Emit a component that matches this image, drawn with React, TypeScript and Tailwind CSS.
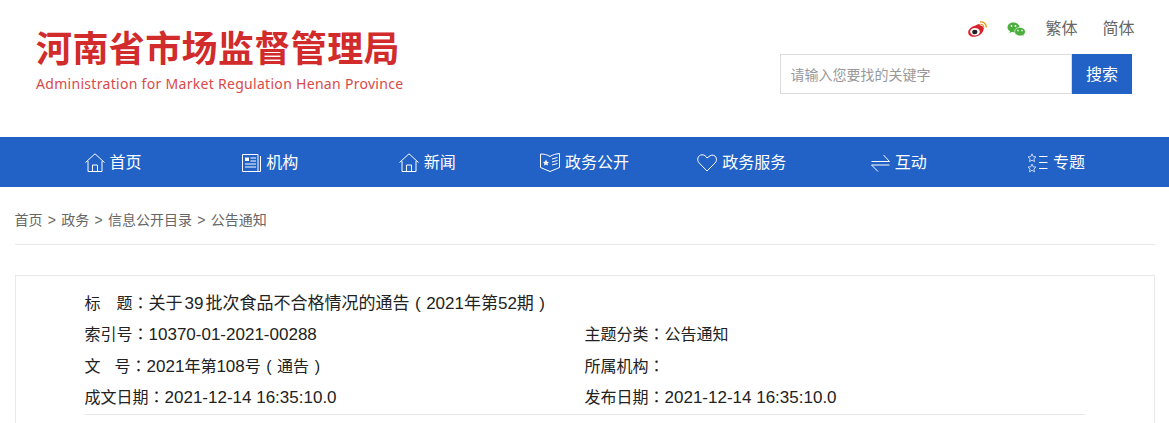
const navItems = [
  { label: "首页", icon: <HomeIcon /> },
  { label: "机构", icon: <PaperIcon /> },
  { label: "新闻", icon: <HomeIcon /> },
  { label: "政务公开", icon: <BookIcon /> },
  { label: "政务服务", icon: <HeartIcon /> },
  { label: "互动", icon: <SwapIcon /> },
  { label: "专题", icon: <StarsIcon /> },
];

function HomeIcon() {
  return (
    <svg width="20" height="19" viewBox="0 0 20 19" fill="none" stroke="white" strokeWidth="1">
      <path d="M0.5 9.5 L10 0.8 L19.5 9.5" />
      <path d="M3 8 V18.5 H17 V8" />
      <path d="M7.5 18.5 V12 H12.5 V18.5" />
    </svg>
  );
}

function PaperIcon() {
  return (
    <svg width="19" height="18" viewBox="0 0 19 18" fill="none" stroke="white" strokeWidth="1">
      <path d="M16 0.5 H0.5 V17.5 H16 Z" />
      <path d="M18.5 2 V17.5 H16" />
      <rect x="3" y="3.5" width="4" height="3.5" fill="white" stroke="none" />
      <path d="M8.5 4 H14 M8.5 7 H14 M3 10 H14 M3 13 H14" />
    </svg>
  );
}

function BookIcon() {
  return (
    <svg width="20" height="19" viewBox="0 0 20 19" fill="none" stroke="white" strokeWidth="1">
      <path d="M0.5 1 C4 1 7 1.5 10 3.5 C13 1.5 16 1 19.5 0.5 V14.5 L10 18.5 L0.5 14.5 Z" />
      <path d="M12 6 L17.5 4.5 M12 9 L17.5 7.5 M12 12 L17.5 10.5" />
      <path d="M6 6.5 L7 8.8 L9 9 L7.5 10.4 L8 12.5 L6 11.4 L4 12.5 L4.5 10.4 L3 9 L5 8.8 Z" fill="white" stroke="none" />
    </svg>
  );
}

function HeartIcon() {
  return (
    <svg width="20" height="18" viewBox="0 0 20 18" fill="none" stroke="white" strokeWidth="1">
      <path d="M10 17 L2 8.8 C-0.5 6 0.8 1 5 0.8 C7.5 0.7 9 2.2 10 4 L13 1.8 C15 0.5 18 1 19 3.5 C20 6 19.3 7.5 18 9 Z" />
    </svg>
  );
}

function SwapIcon() {
  return (
    <svg width="19" height="18" viewBox="0 0 19 18" fill="none" stroke="white" strokeWidth="1">
      <path d="M0.5 7.5 H18.5 L12.5 1" />
      <path d="M18.5 11 H0.5 L7 17.5" />
    </svg>
  );
}

function StarsIcon() {
  return (
    <svg width="21" height="20" viewBox="0 0 21 20" fill="none" stroke="#c7d7f2" strokeWidth="1">
      <path d="M5 0.8 L6.2 3.6 L9 3.9 L6.9 5.8 L7.5 8.6 L5 7.2 L2.5 8.6 L3.1 5.8 L1 3.9 L3.8 3.6 Z" />
      <path d="M5 11 L6.2 13.8 L9 14.1 L6.9 16 L7.5 18.8 L5 17.4 L2.5 18.8 L3.1 16 L1 14.1 L3.8 13.8 Z" />
      <path d="M12 3.5 H20.5 M12 9.5 H20.5 M12 15.5 H20.5" stroke="white" />
    </svg>
  );
}

function WeiboIcon() {
  return (
    <svg width="19" height="17" viewBox="0 0 19 17">
      <path d="M7.5 4.5 C10.5 2.5 12.5 3 12.7 5 C15 5 16.5 6.5 15.5 9 C14.3 13 10 15.8 6 15.8 C2.5 15.8 0.2 14 0.2 11.2 C0.2 8.5 3.5 5.5 7.5 4.5 Z" fill="#d8232a" />
      <ellipse cx="7" cy="10.8" rx="4.8" ry="3.8" fill="white" />
      <ellipse cx="6.8" cy="11" rx="2.6" ry="2.3" fill="#222" />
      <path d="M12 1 C15.5 0.4 18.6 3 18.2 6.5" fill="none" stroke="#f29a1f" strokeWidth="1.4" />
      <path d="M12.5 3.5 C14.3 3.2 15.9 4.5 15.7 6.3" fill="none" stroke="#f29a1f" strokeWidth="1.2" />
    </svg>
  );
}

function WechatIcon() {
  return (
    <svg width="19" height="15" viewBox="0 0 19 15">
      <path d="M6.5 0.5 C10 0.5 12.5 2.6 12.5 5.4 C12.5 8.2 10 10.2 6.5 10.2 L4.5 10 L2.5 11.2 L3 9.2 C1.4 8.2 0.5 6.9 0.5 5.4 C0.5 2.6 3 0.5 6.5 0.5 Z" fill="#4caf3d" />
      <path d="M12.8 5.4 C16 5.4 18.4 7.3 18.4 9.7 C18.4 11 17.7 12.1 16.6 12.9 L17 14.5 L15.3 13.6 C11.8 14.7 7.6 12.8 7.6 9.7 C7.6 7.3 9.8 5.4 12.8 5.4 Z" fill="#4caf3d" stroke="white" strokeWidth="0.6" />
      <circle cx="4.5" cy="4" r="0.9" fill="white" />
      <circle cx="8.5" cy="4" r="0.9" fill="white" />
      <circle cx="11" cy="8.6" r="0.8" fill="white" />
      <circle cx="15" cy="8.6" r="0.8" fill="white" />
    </svg>
  );
}

// digits run a little larger than the CJK text around them
function Num({ children }: { children: React.ReactNode }) {
  return <span className="text-[17px] leading-none">{children}</span>;
}

// fullwidth colon sits centred in its cell
function Colon() {
  return <span className="leading-none font-['Noto_Sans_CJK_TC',sans-serif]">：</span>;
}

function Paren({ children }: { children: React.ReactNode }) {
  return <span className="mx-[5.5px]">{children}</span>;
}

export default function App() {
  return (
    <div className="h-[423px] overflow-hidden bg-white font-['Liberation_Sans','Noto_Sans_CJK_SC',sans-serif]">
      <header className="mx-auto flex h-[137px] w-[1100px] justify-between">
        <div className="pl-[1.5px] pt-[26px]">
          <h1 className="text-[36px] leading-[48px] font-bold tracking-[0.4px] whitespace-nowrap text-[#d12b2b]">
            河南省市场监督管理局
          </h1>
          <p className="text-[14px] leading-[20px] tracking-[0.3px] whitespace-nowrap text-[#d84a4a] font-['Noto_Sans',sans-serif]">
            Administration for Market Regulation Henan Province
          </p>
        </div>
        <div className="flex w-[355px] flex-col pt-[17px]">
          <div className="flex h-[24px] items-center justify-end text-[16px] text-[#666]">
            <span className="mr-[20px]"><WeiboIcon /></span>
            <span className="mr-[19px]"><WechatIcon /></span>
            <span className="mr-[25px]">繁体</span>
            <span>简体</span>
          </div>
          <div className="mt-[13px] mr-[2.5px] flex h-[40px]">
            <div className="flex flex-1 items-center border border-[#dcdcdc] pl-[10px] pt-[2px] text-[14px] text-[#999]">
              请输入您要找的关键字
            </div>
            <button className="w-[60px] bg-[#2262c6] pt-[2px] text-[16px] text-white">搜索</button>
          </div>
        </div>
      </header>

      <nav className="h-[50px] bg-[#2262c6]">
        <ul className="mx-auto grid h-full w-[1100px] grid-cols-7">
          {navItems.map((item) => (
            <li key={item.label} className="flex items-center justify-center gap-[5px] pt-[1px] text-[16px] text-white">
              {item.icon}
              <span>{item.label}</span>
            </li>
          ))}
        </ul>
      </nav>

      <main className="mx-auto w-[1140px]">
        <div className="flex h-[58px] items-center gap-[5.3px] border-b border-[#e8e8e8] pt-[9px] text-[14px] text-[#666]">
          <span>首页</span><span>&gt;</span>
          <span>政务</span><span>&gt;</span>
          <span>信息公开目录</span><span>&gt;</span>
          <span>公告通知</span>
        </div>

        <section className="mt-[30px] border border-[#e8e8e8] px-[69px] pt-[12px] pb-[40px] text-[16px] leading-[31.4px] text-[#222]">
          <div className="border-b border-[#e8e8e8]">
            <p>
              标　题<Colon />
              <span className="text-[17px] leading-none">
                关于<span className="mx-[2px]">39</span>批次食品不合格情况的通告<Paren>(</Paren>2021年第52期<Paren>)</Paren>
              </span>
            </p>
            <div className="grid grid-cols-2">
              <p>索引号<Colon /><Num>10370-01-2021-00288</Num></p>
              <p>主题分类<Colon />公告通知</p>
              <p>文<span className="ml-[14px]">号</span><Colon /><Num>2021</Num>年第<Num>108</Num>号<Paren>(</Paren>通告<Paren>)</Paren></p>
              <p>所属机构<Colon /></p>
              <p>成文日期<Colon /><Num>2021-12-14 16:35:10.0</Num></p>
              <p>发布日期<Colon /><Num>2021-12-14 16:35:10.0</Num></p>
            </div>
          </div>
        </section>
      </main>
    </div>
  );
}
